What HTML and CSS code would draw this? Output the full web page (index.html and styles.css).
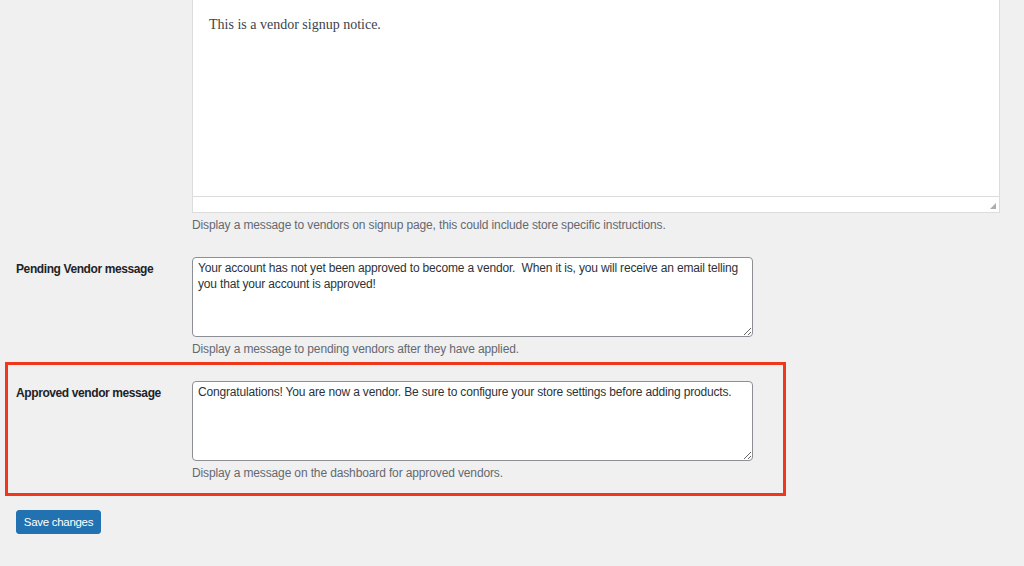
FILE: index.html
```html
<!DOCTYPE html>
<html lang="en">
<head>
<meta charset="utf-8">
<title>Vendor settings</title>
<link rel="stylesheet" href="styles.css">
</head>
<body>
<div class="page">
  <div class="row row-editor">
    <div class="label-cell"></div>
    <div class="field-cell">
      <div class="editor">
        <div class="editor-body">This is a vendor signup notice.</div>
        <div class="editor-status"><span class="grip"></span></div>
      </div>
      <p class="description">Display a message to vendors on signup page, this could include store specific instructions.</p>
    </div>
  </div>

  <div class="row">
    <div class="label-cell"><label class="label" for="pending">Pending Vendor message</label></div>
    <div class="field-cell">
      <textarea id="pending" class="textarea">Your account has not yet been approved to become a vendor.  When it is, you will receive an email telling you that your account is approved!</textarea>
      <p class="description">Display a message to pending vendors after they have applied.</p>
    </div>
  </div>

  <div class="row row-highlight">
    <div class="label-cell"><label class="label" for="approved">Approved vendor message</label></div>
    <div class="field-cell">
      <textarea id="approved" class="textarea">Congratulations! You are now a vendor. Be sure to configure your store settings before adding products.</textarea>
      <p class="description">Display a message on the dashboard for approved vendors.</p>
    </div>
  </div>

  <div class="actions">
    <button class="button-primary" type="button">Save changes</button>
  </div>
</div>
</body>
</html>
```

FILE: styles.css
```css
*, *::before, *::after { box-sizing: border-box; }
html, body { margin: 0; padding: 0; }
body {
  background: #f0f0f1;
  font-family: "Liberation Sans", Arial, sans-serif;
  font-size: 12px;
  color: #3c434a;
  width: 1024px;
  height: 566px;
  overflow: hidden;
}
.page {
  padding: 0 25px 0 16px;
}
.row {
  display: grid;
  grid-template-columns: 176px 1fr;
  margin-top: 24px;
}
.row-editor { margin-top: 0; }
.label-cell { padding-top: 4px; }
.label {
  display: block;
  font-weight: bold;
  font-size: 12px;
  line-height: 16px;
  letter-spacing: -0.4px;
  color: #1d2327;
}
.editor {
  background: #fff;
  border: 1px solid #dcdcde;
  border-top: none;
  width: 808px;
}
.editor-body {
  height: 196px;
  padding: 17px 16px 0;
  font-family: "Liberation Serif", Georgia, serif;
  font-size: 14px;
  line-height: 16px;
  color: #3c434a;
}
.editor-status {
  height: 16px;
  border-top: 1px solid #dcdcde;
  position: relative;
}
.grip {
  position: absolute;
  right: 3px;
  bottom: 3px;
  width: 6px;
  height: 6px;
  background:
    radial-gradient(circle, #a7aaad 0.7px, transparent 0.9px) 0 0 / 2px 2px;
  clip-path: polygon(100% 0, 100% 100%, 0 100%);
}
.description {
  margin: 4px 0 0;
  font-size: 12px;
  line-height: 16px;
  letter-spacing: -0.13px;
  color: #646970;
}
.textarea {
  display: block;
  width: 561px;
  height: 80px;
  margin: 0;
  padding: 2px 5px;
  border: 1px solid #8c8f94;
  border-radius: 4px;
  background: #fff;
  font-family: "Liberation Sans", Arial, sans-serif;
  font-size: 12px;
  line-height: 16px;
  letter-spacing: -0.17px;
  color: #2c3338;
  resize: vertical;
}
.row-highlight { position: relative; }
.row-highlight::before {
  content: "";
  position: absolute;
  left: -11px;
  top: -19px;
  width: 781px;
  height: 134px;
  border: 3px solid #f0361b;
  pointer-events: none;
}
.actions {
  margin-top: 29px;
}
.button-primary {
  display: block;
  width: 85px;
  height: 24px;
  padding: 0;
  border: 1px solid #2271b1;
  border-radius: 3px;
  background: #2271b1;
  color: #fff;
  font-family: "Liberation Sans", Arial, sans-serif;
  font-size: 11.5px;
  letter-spacing: -0.3px;
  line-height: 22px;
  text-align: center;
  cursor: pointer;
}
```
